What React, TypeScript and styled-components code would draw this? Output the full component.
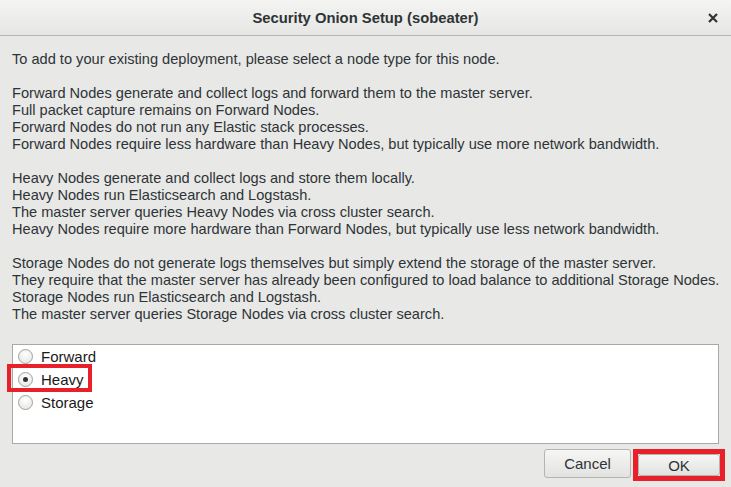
import React from "react";
import styled, { createGlobalStyle } from "styled-components";

const GlobalStyle = createGlobalStyle`
  html, body {
    margin: 0;
    padding: 0;
    background: #e8e8e7;
  }
`;

const Dialog = styled.div`
  width: 731px;
  height: 487px;
  background: #e8e8e7;
  font-family: "Liberation Sans", Arial, sans-serif;
  color: #2e3436;
  display: flex;
  flex-direction: column;
  overflow: hidden;
`;

const TitleBar = styled.div`
  height: 35px;
  flex: none;
  border-bottom: 1px solid #b6b6b3;
  background: linear-gradient(#f4f4f3, #e6e6e4);
  display: flex;
  align-items: center;
  justify-content: center;
  position: relative;
`;

const Title = styled.div`
  font-weight: bold;
  font-size: 14.8px;
  color: #2e3436;
`;

const CloseButton = styled.div`
  position: absolute;
  right: 10px;
  top: 10px;
  width: 16px;
  height: 16px;
  display: flex;
  align-items: center;
  justify-content: center;
`;

const Body = styled.div`
  flex: 1;
  display: flex;
  flex-direction: column;
  padding: 15px 12px 0 12px;
`;

const Message = styled.div`
  font-size: 14.6px;
  line-height: 17px;
`;

const Paragraph = styled.p`
  margin: 0 0 17px 0;
  white-space: pre;
`;

const ListBox = styled.div`
  margin-top: 4px;
  height: 100px;
  width: 707px;
  background: #ffffff;
  border: 1px solid #a9a9a7;
  padding-top: 0;
  box-sizing: border-box;
`;

const RadioRow = styled.label`
  position: relative;
  display: flex;
  align-items: center;
  height: 23px;
  padding-left: 5px;
  font-size: 15px;
  color: #1a1a1a;
  gap: 8px;
`;

const Highlight = styled.div`
  position: absolute;
  left: -6px;
  top: -4px;
  width: 85px;
  height: 28px;
  border: 4px solid #e8202a;
  box-sizing: border-box;
  pointer-events: none;
`;

const RadioCircle = styled.span<{ $checked?: boolean }>`
  width: 15px;
  height: 15px;
  border-radius: 50%;
  border: 1px solid #a0a09e;
  background: radial-gradient(circle at 50% 35%, #ffffff, #e2e2e0);
  box-sizing: border-box;
  display: flex;
  align-items: center;
  justify-content: center;

  &::after {
    content: "";
    width: 5px;
    height: 5px;
    border-radius: 50%;
    background: ${(p) => (p.$checked ? "#2e3436" : "transparent")};
  }
`;

const ButtonBar = styled.div`
  display: flex;
  justify-content: flex-end;
  align-items: flex-start;
  gap: 2px;
  margin-top: 5px;
  margin-right: -6px;
`;

const ButtonWrap = styled.div<{ $highlight?: boolean }>`
  box-sizing: border-box;
  border: 5px solid ${(p) => (p.$highlight ? "#e8202a" : "transparent")};
`;

const Button = styled.button<{ $width: number; $height: number }>`
  width: ${(p) => p.$width}px;
  height: ${(p) => p.$height}px;
  font-family: "Liberation Sans", Arial, sans-serif;
  font-size: 15px;
  color: #2e3436;
  border: 1px solid #b4b4b2;
  border-radius: 3px;
  background: linear-gradient(#f6f6f5, #e2e2e0);
  display: flex;
  align-items: center;
  justify-content: center;
  padding: 0;
`;

const paragraphs = [
  "To add to your existing deployment, please select a node type for this node.",
  "Forward Nodes generate and collect logs and forward them to the master server.\nFull packet capture remains on Forward Nodes.\nForward Nodes do not run any Elastic stack processes.\nForward Nodes require less hardware than Heavy Nodes, but typically use more network bandwidth.",
  "Heavy Nodes generate and collect logs and store them locally.\nHeavy Nodes run Elasticsearch and Logstash.\nThe master server queries Heavy Nodes via cross cluster search.\nHeavy Nodes require more hardware than Forward Nodes, but typically use less network bandwidth.",
  "Storage Nodes do not generate logs themselves but simply extend the storage of the master server.\nThey require that the master server has already been configured to load balance to additional Storage Nodes.\nStorage Nodes run Elasticsearch and Logstash.\nThe master server queries Storage Nodes via cross cluster search.",
];

const options = [
  { label: "Forward", checked: false },
  { label: "Heavy", checked: true },
  { label: "Storage", checked: false },
];

const App = () => (
  <>
    <GlobalStyle />
    <Dialog>
      <TitleBar>
        <Title>Security Onion Setup (sobeater)</Title>
        <CloseButton>
          <svg width="10" height="10" viewBox="0 0 10 10">
            <path d="M1 1 L9 9 M9 1 L1 9" stroke="#2e3436" strokeWidth="2.2" />
          </svg>
        </CloseButton>
      </TitleBar>
      <Body>
        <Message>
          {paragraphs.map((p, i) => (
            <Paragraph key={i}>{p}</Paragraph>
          ))}
        </Message>
        <ListBox>
          {options.map((o) => (
            <RadioRow key={o.label}>
              {o.checked && <Highlight />}
              <RadioCircle $checked={o.checked} />
              {o.label}
            </RadioRow>
          ))}
        </ListBox>
        <ButtonBar>
          <Button $width={87} $height={29}>Cancel</Button>
          <ButtonWrap $highlight>
            <Button $width={82} $height={22}>OK</Button>
          </ButtonWrap>
        </ButtonBar>
      </Body>
    </Dialog>
  </>
);

export default App;
